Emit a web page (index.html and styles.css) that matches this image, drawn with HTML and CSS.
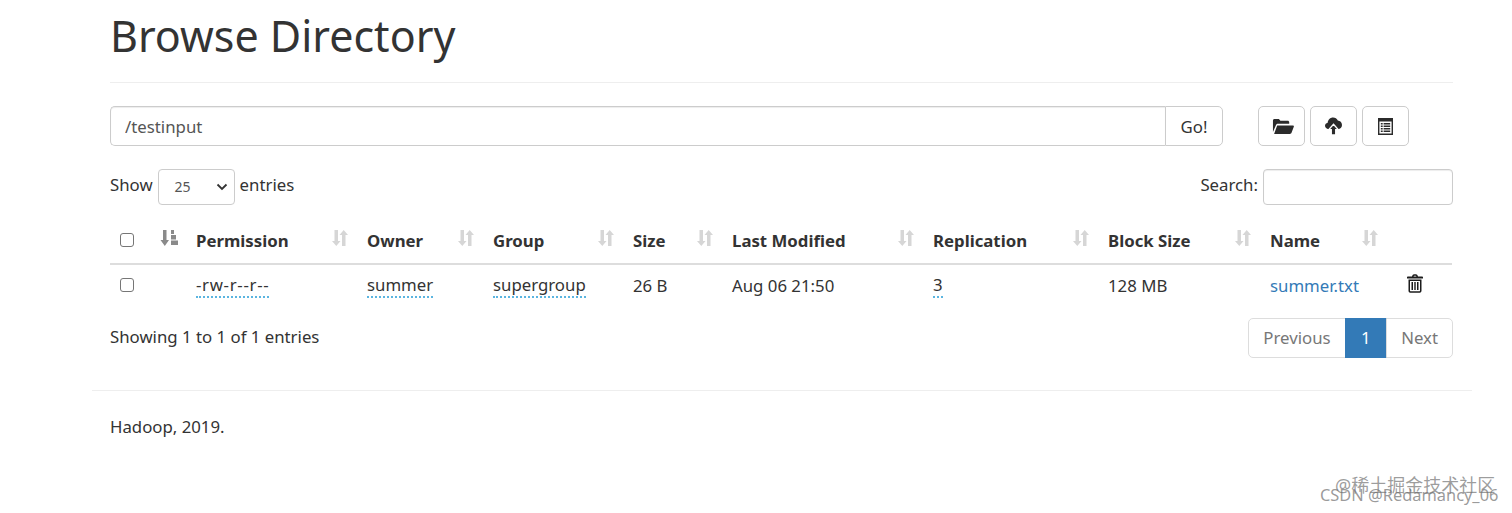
FILE: index.html
```html
<!DOCTYPE html>
<html lang="en">
<head>
<meta charset="utf-8">
<title>Browse Directory</title>
<link rel="stylesheet" href="styles.css">
</head>
<body>
<div class="container">
  <div class="inner">
    <h1 class="title">Browse Directory</h1>
    <div class="toolbar">
      <div class="path-group">
        <input class="path-input" type="text" value="/testinput">
        <button class="go-btn" type="button">Go!</button>
      </div>
      <div class="actions">
        <button class="icon-btn" type="button" aria-label="Create directory">
          <svg class="folder" width="22" height="16" viewBox="0 0 23 17" preserveAspectRatio="none"><path fill="#2b2b2b" d="M1 15V2.600C1 1.700 1.700 1 2.600 1h4.600l1.600 2h7.600c.9 0 1.600.7 1.600 1.600V6H6.200c-.9 0-1.600.5-1.900 1.300zM5.400 8h16.400c.8 0 1.300.7 1 1.400l-2.400 6.400c-.2.7-.9 1.200-1.700 1.200H2.200z"/></svg>
        </button>
        <button class="icon-btn" type="button" aria-label="Upload">
          <svg width="17" height="18" viewBox="0 0 19 20"><path fill="#2b2b2b" d="M4 13.500C1.800 13.500 0 11.900 0 9.800 0 8 1.300 6.600 3 6.300 3.300 3 5.800 .5 9 .5c2.400 0 4.400 1.300 5.300 3.300 2.600.1 4.700 2.300 4.700 5 0 2.600-2 4.700-4.500 4.700z"/><path fill="#2b2b2b" stroke="#fff" stroke-width="1.500" d="M9.500 8l5.500 6.200h-3V20H7v-5.800H4z"/></svg>
        </button>
        <button class="icon-btn" type="button" aria-label="Parquet">
          <svg width="15" height="17" viewBox="0 0 16 17" preserveAspectRatio="none"><path fill="#2b2b2b" fill-rule="evenodd" d="M0 0h16v17H0zM1.500 3.500v12h13v-12zM3 5h2v1.500H3zM6 5h7v1.500H6zM3 7.500h2V9H3zM6 7.500h7V9H6zM3 10h2v1.500H3zM6 10h7v1.500H6zM3 12.500h2V14H3zM6 12.500h7V14H6z"/></svg>
        </button>
      </div>
    </div>
    <div class="table-controls">
      <label class="length">Show <span class="select"><span>25</span><svg width="12" height="8" viewBox="0 0 12 8"><path d="M1.500 1.500L6 6l4.500-4.500" fill="none" stroke="#333" stroke-width="1.800"/></svg></span> entries</label>
      <label class="search">Search: <input class="search-input" type="text"></label>
    </div>
    <table class="files">
      <colgroup>
        <col class="c-check"><col class="c-sort"><col class="c-perm"><col class="c-owner"><col class="c-group"><col class="c-size"><col class="c-mod"><col class="c-rep"><col class="c-block"><col class="c-name"><col class="c-del">
      </colgroup>
      <thead>
        <tr>
          <th><span class="box"></span></th>
          <th class="sort-only"><svg class="sort on" width="18" height="18" viewBox="0 0 18 18"><path d="M3 1h3.500v10H9l-4.200 6L.5 11H3z"/><path d="M11 1h3v4h-3zM11 6h5v4.500h-5zM11 11.500h7V16h-7z"/></svg></th>
          <th><div class="h">Permission<svg class="sort" width="16" height="18" viewBox="0 0 16 18"><path d="M2.500 1h3.500v11h2.500L4.300 17 0 12h2.500zM10 17V6H7.500l4.200-5L16 6h-2.500v11z"/></svg></div></th>
          <th><div class="h">Owner<svg class="sort" width="16" height="18" viewBox="0 0 16 18"><path d="M2.500 1h3.500v11h2.500L4.300 17 0 12h2.500zM10 17V6H7.500l4.200-5L16 6h-2.500v11z"/></svg></div></th>
          <th><div class="h">Group<svg class="sort" width="16" height="18" viewBox="0 0 16 18"><path d="M2.500 1h3.500v11h2.500L4.300 17 0 12h2.500zM10 17V6H7.500l4.200-5L16 6h-2.500v11z"/></svg></div></th>
          <th><div class="h">Size<svg class="sort" width="16" height="18" viewBox="0 0 16 18"><path d="M2.500 1h3.500v11h2.500L4.300 17 0 12h2.500zM10 17V6H7.500l4.200-5L16 6h-2.500v11z"/></svg></div></th>
          <th><div class="h">Last Modified<svg class="sort" width="16" height="18" viewBox="0 0 16 18"><path d="M2.500 1h3.500v11h2.500L4.300 17 0 12h2.500zM10 17V6H7.500l4.200-5L16 6h-2.500v11z"/></svg></div></th>
          <th><div class="h">Replication<svg class="sort" width="16" height="18" viewBox="0 0 16 18"><path d="M2.500 1h3.500v11h2.500L4.300 17 0 12h2.500zM10 17V6H7.500l4.200-5L16 6h-2.500v11z"/></svg></div></th>
          <th><div class="h">Block Size<svg class="sort" width="16" height="18" viewBox="0 0 16 18"><path d="M2.500 1h3.500v11h2.500L4.300 17 0 12h2.500zM10 17V6H7.500l4.200-5L16 6h-2.500v11z"/></svg></div></th>
          <th><div class="h">Name<svg class="sort" width="16" height="18" viewBox="0 0 16 18"><path d="M2.500 1h3.500v11h2.500L4.300 17 0 12h2.500zM10 17V6H7.500l4.200-5L16 6h-2.500v11z"/></svg></div></th>
          <th></th>
        </tr>
      </thead>
      <tbody>
        <tr>
          <td><span class="box"></span></td>
          <td></td>
          <td><span class="dotted perm">-rw-r--r--</span></td>
          <td><span class="dotted">summer</span></td>
          <td><span class="dotted">supergroup</span></td>
          <td>26 B</td>
          <td>Aug 06 21:50</td>
          <td><span class="dotted">3</span></td>
          <td>128 MB</td>
          <td><a class="link" href="#">summer.txt</a></td>
          <td><svg class="trash" width="16" height="19" viewBox="0 0 16 19"><path fill="#1c1c1c" fill-rule="evenodd" d="M5 2.500C5.400 1 6.200.3 7 .3h2c.8 0 1.600.7 2 2.200h4c.5 0 1 .3 1 .8v1.200H0V3.300c0-.5.500-.8 1-.8zM6.500 2.500h3C9.300 2 8.900 1.700 8.700 1.700H7.300c-.2 0-.6.3-.8.8zM1.500 5.500h13v11.300c0 1.200-.8 2-1.800 2H3.300c-1 0-1.800-.8-1.800-2zM3 7v9.800c0 .3.200.5.300.5h9.400c.1 0 .3-.2.300-.5V7zM4.500 8H6v8H4.500zM7.300 8h1.400v8H7.300zM10 8h1.500v8H10z"/></svg></td>
        </tr>
      </tbody>
    </table>
    <div class="table-footer">
      <div class="info">Showing 1 to 1 of 1 entries</div>
      <div class="pager">
        <span class="page first">Previous</span><span class="page current">1</span><span class="page last">Next</span>
      </div>
    </div>
  </div>
  <hr class="rule">
  <div class="inner"><p class="copy">Hadoop, 2019.</p></div>
</div>
<div class="mark mark-a">@稀土掘金技术社区</div>
<div class="mark mark-b">CSDN @Redamancy_06</div>
</body>
</html>
```
FILE: styles.css
```css
* { box-sizing: border-box; }
html, body { margin: 0; padding: 0; }
body {
  width: 1512px;
  height: 513px;
  overflow: hidden;
  background: #fff;
  color: #333;
  font-family: "Noto Sans", "Noto Sans CJK SC", sans-serif;
  font-size: 16.800px;
  position: relative;
}
.container { width: 1380px; margin-left: 92px; }
.inner { padding: 0 19px 0 18px; }
.title {
  margin: 0;
  height: 83px;
  padding-top: 5px;
  font-size: 43px;
  line-height: 62px;
  font-weight: 400;
  border-bottom: 1px solid #eee;
}
.toolbar { display: flex; margin-top: 23px; height: 40px; }
.path-group { display: flex; width: 1113px; }
.path-input {
  flex: 1;
  min-width: 0;
  height: 40px;
  padding: 0 14px;
  border: 1px solid #ccc;
  border-right: 0;
  border-radius: 5px 0 0 5px;
  font: inherit;
  color: #555;
  box-shadow: inset 0 1px 1px rgba(0,0,0,.075);
}
.go-btn {
  width: 58px;
  height: 40px;
  border: 1px solid #ccc;
  border-radius: 0 5px 5px 0;
  background: #fff;
  color: #333;
  font: inherit;
  padding: 0;
}
.actions { display: flex; gap: 5px; margin-left: 35px; }
.icon-btn {
  width: 47px;
  height: 40px;
  padding: 0;
  border: 1px solid #ccc;
  border-radius: 5px;
  background: #fff;
  display: flex;
  align-items: center;
  justify-content: center;
}
.folder { margin-left: 3px; }
.table-controls {
  display: flex;
  justify-content: space-between;
  align-items: center;
  margin-top: 23px;
  height: 37px;
}
.length, .search { display: flex; align-items: center; gap: 5px; line-height: 30px; margin-top: -5px; }
.select {
  display: flex;
  align-items: center;
  justify-content: space-between;
  width: 77px;
  height: 36px;
  margin-top: 3px;
  padding: 0 6px 0 16px;
  border: 1px solid #ccc;
  border-radius: 4px;
  font-size: 14px;
  color: #555;
}
.search-input {
  width: 190px;
  height: 36px;
  margin-top: 3px;
  border: 1px solid #ccc;
  border-radius: 4px;
  box-shadow: inset 0 1px 1px rgba(0,0,0,.075);
}
.files { width: 1342px; border-collapse: collapse; table-layout: fixed; margin-top: 11px; }
.c-check { width: 50px; }
.c-sort { width: 36px; }
.c-perm { width: 171px; }
.c-owner { width: 126px; }
.c-group { width: 140px; }
.c-size { width: 99px; }
.c-mod { width: 201px; }
.c-rep { width: 175px; }
.c-block { width: 162px; }
.c-name { width: 127px; }
.c-del { width: 55px; }
.files th, .files td { padding: 0; text-align: left; vertical-align: middle; white-space: nowrap; }
.files th { height: 47px; border-bottom: 2px solid #ddd; font-weight: 700; }
.files td { height: 41px; border-bottom: 0; }
.files th:first-child, .files td:first-child { padding-left: 10px; }
.box {
  display: block;
  width: 14px;
  height: 14px;
  border: 1.5px solid #767676;
  border-radius: 3px;
  background: #fff;
}
.h { display: flex; justify-content: space-between; align-items: center; padding-right: 19px; }
.sort { fill: #d6d6d6; display: block; }
.sort.on { fill: #8a8a8a; margin-left: 0; }
.sort-only .sort { margin-top: -5px; }
.h .sort { margin-top: -5px; }
.dotted { border-bottom: 2px dotted #5bb5e0; display: inline-block; line-height: 22px; }
.perm { letter-spacing: .7px; }
.link { color: #337ab7; text-decoration: none; }
.trash { display: block; margin-left: 10px; margin-top: -3px; }
.table-footer { display: flex; justify-content: space-between; margin-top: 13px; height: 40px; }
.info { line-height: 38px; }
.pager { display: flex; height: 40px; }
.page {
  display: block;
  height: 40px;
  line-height: 38px;
  padding: 0 14px;
  border: 1px solid #ddd;
  margin-left: -1px;
  color: #777;
  background: #fff;
}
.first { border-radius: 5px 0 0 5px; }
.last { border-radius: 0 5px 5px 0; }
.current { padding: 0 15.500px; background: #337ab7; border-color: #337ab7; color: #fff; font-weight: 400; }
.rule { border: 0; border-top: 1px solid #eee; margin: 32px 0 0; }
.copy { margin: 0; padding-top: 23px; line-height: 25px; font-size: 16.800px; }
.mark { position: absolute; white-space: nowrap; color: rgba(90,90,90,.6); }
.mark-a { left: 1335px; top: 472px; font-size: 18px; line-height: 26px; }
.mark-b { left: 1320px; top: 483px; font-size: 16.400px; line-height: 24px; color: rgba(110,110,110,.7); }
```
